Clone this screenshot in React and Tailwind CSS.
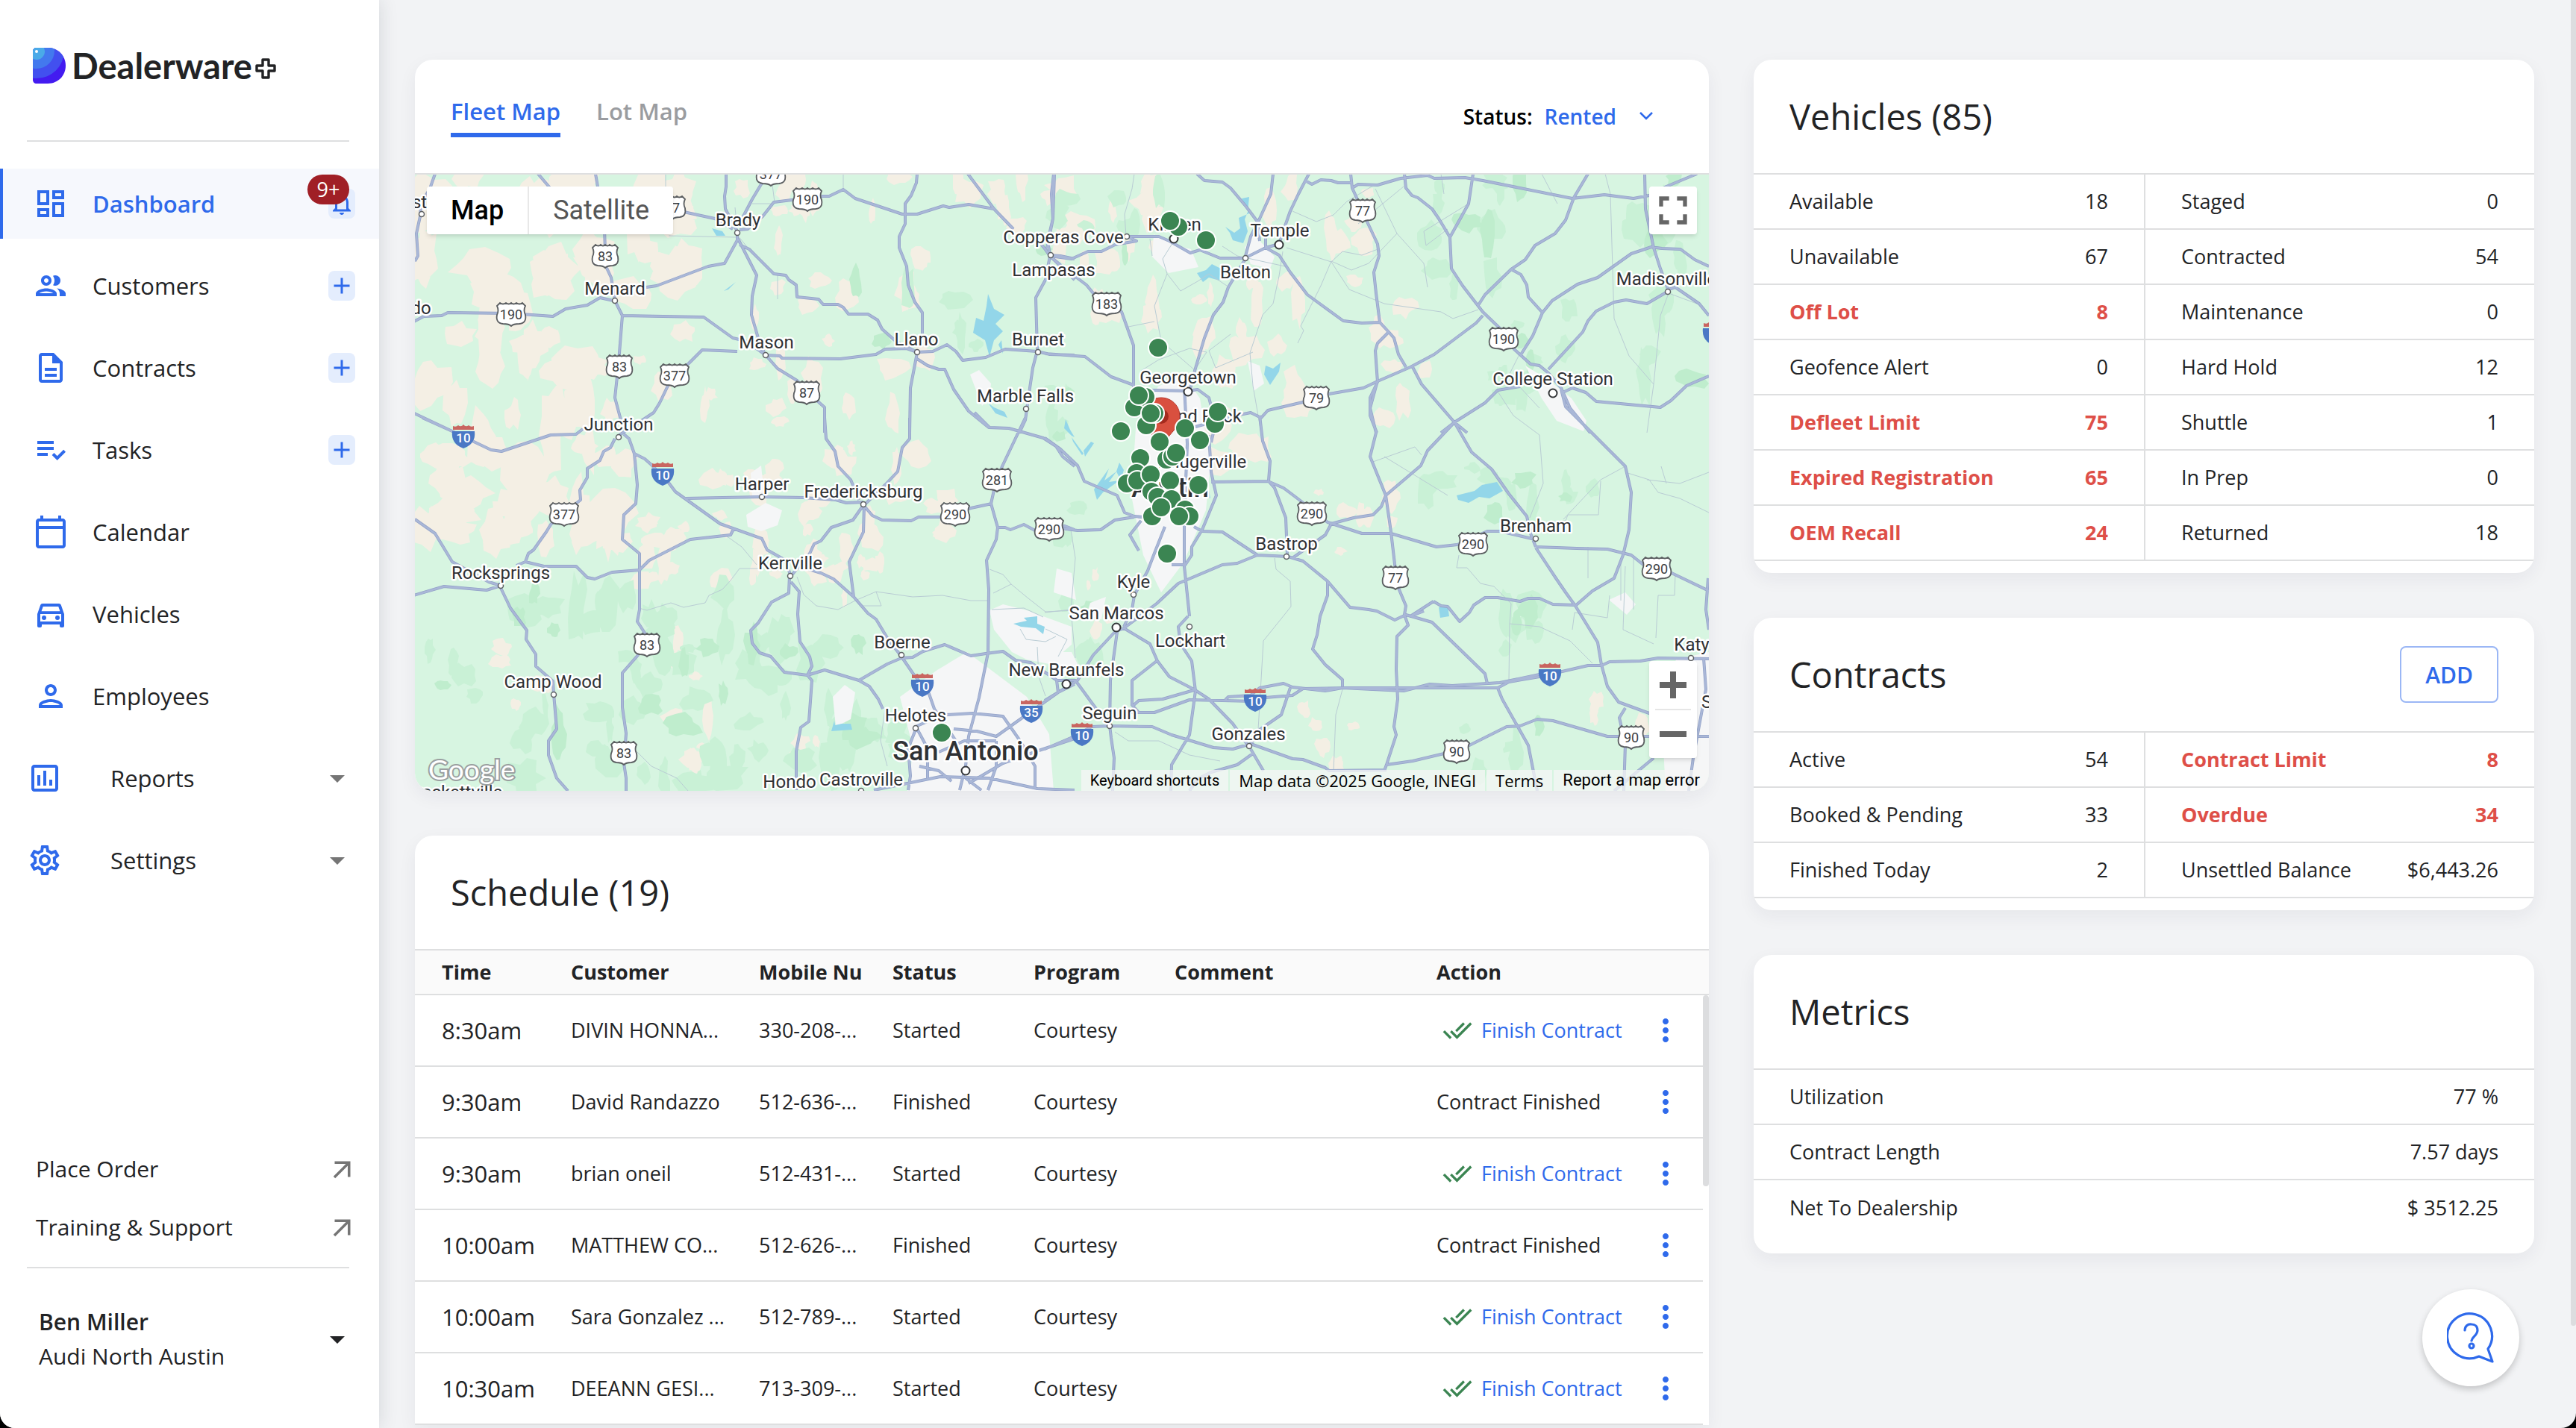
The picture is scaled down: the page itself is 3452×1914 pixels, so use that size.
import { useState } from 'react';
import {
  MdAdd,
  MdArrowDropDown,
  MdArrowOutward,
  MdDoneAll,
  MdFullscreen,
  MdMoreVert,
  MdNotificationsNone,
  MdOutlineAssessment,
  MdOutlineCalendarToday,
  MdOutlineDashboard,
  MdOutlineDescription,
  MdOutlineDirectionsCar,
  MdOutlineGroup,
  MdOutlinePerson,
  MdOutlineSettings,
  MdPlaylistAddCheck,
} from 'react-icons/md';

/* ── Data ───────────────────────────────────────────────────────── */
const NAV = [
  { label: 'Dashboard', Icon: MdOutlineDashboard, active: true, badge: '9+' },
  { label: 'Customers', Icon: MdOutlineGroup, add: true },
  { label: 'Contracts', Icon: MdOutlineDescription, add: true },
  { label: 'Tasks', Icon: MdPlaylistAddCheck, add: true },
  { label: 'Calendar', Icon: MdOutlineCalendarToday },
  { label: 'Vehicles', Icon: MdOutlineDirectionsCar },
  { label: 'Employees', Icon: MdOutlinePerson },
];

const NAV_GROUPS = [
  { label: 'Reports', Icon: MdOutlineAssessment },
  { label: 'Settings', Icon: MdOutlineSettings },
];

const VEHICLES = [
  [['Available', '18'], ['Staged', '0']],
  [['Unavailable', '67'], ['Contracted', '54']],
  [['Off Lot', '8', true], ['Maintenance', '0']],
  [['Geofence Alert', '0'], ['Hard Hold', '12']],
  [['Defleet Limit', '75', true], ['Shuttle', '1']],
  [['Expired Registration', '65', true], ['In Prep', '0']],
  [['OEM Recall', '24', true], ['Returned', '18']],
];

const CONTRACTS = [
  [['Active', '54'], ['Contract Limit', '8', true]],
  [['Booked & Pending', '33'], ['Overdue', '34', true]],
  [['Finished Today', '2'], ['Unsettled Balance', '$6,443.26']],
];

const METRICS = [
  ['Utilization', '77 %'],
  ['Contract Length', '7.57 days'],
  ['Net To Dealership', '$ 3512.25'],
];

const SCHEDULE = [
  { time: '8:30am', customer: 'DIVIN HONNA...', mobile: '330-208-...', status: 'Started' },
  { time: '9:30am', customer: 'David Randazzo', mobile: '512-636-...', status: 'Finished' },
  { time: '9:30am', customer: 'brian oneil', mobile: '512-431-...', status: 'Started' },
  { time: '10:00am', customer: 'MATTHEW CO...', mobile: '512-626-...', status: 'Finished' },
  { time: '10:00am', customer: 'Sara Gonzalez ...', mobile: '512-789-...', status: 'Started' },
  { time: '10:30am', customer: 'DEEANN GESI...', mobile: '713-309-...', status: 'Started' },
];

/* ── Map data: every tile keeps its own units ───────────────────── */
const TILES = {
  nw: { x: -16, y: -174, sx: 1.742, sy: 3 },
  ne: { x: 844, y: -174, sx: 1.704, sy: 3 },
  sw: { x: -16, y: 326, sx: 1.742, sy: 3 },
  se: { x: 844, y: 246, sx: 1.704, sy: 2.613 },
};

const ROADS = {
  nw: [
    '75,520 62,580 42,640 40,690 32,760 34,850 28,870',
    '20,1120 48,1092 90,1090 104,1077 250,1080 350,1092 380,1062 430,1047 460,1018 492,1028',
    '315,520 345,580', '450,520 454,570', '471,740 472,830 473,890 486,935 494,1030 512,1088 506,1240 500,1335 495,1420 508,1510',
    '512,1090 702,1095 770,1180 800,1190 845,1245',
    '568,975 592,970 712,890 750,878 780,785 780,760',
    '640,665 728,700 770,740', '755,520 755,570 750,610 752,660 780,750',
    '850,540 836,560 815,620 795,690 785,720', '785,745 805,742 840,690 865,632 908,625 980,610 995,608 1028,583 1055,618 1165,680 1200,682 1262,648 1275,653 1320,642 1380,660',
    '1318,520 1380,660 1425,740', '1490,800 1510,845',
    '1200,520 1198,555 1186,605 1173,640 1172,720 1158,772 1158,815 1175,890 1180,965 1195,1035 1212,1077 1212,1160',
    '1520,520 1518,700 1505,790 1510,845',
    '783,780 825,928 815,1010 814,1085 830,1180 845,1245',
    '785,805 808,822 865,922 893,928 900,945 918,967 920,1013 970,1023 980,1043 1015,1045 1028,1055 1040,1082 1085,1082 1108,1107 1118,1142 1150,1190 1200,1235',
    '780,1232 698,1227 668,1280 618,1370 600,1440 585,1480 560,1510 505,1570',
    '846,1247 880,1252 885,1260 1020,1262 1105,1245 1125,1223 1175,1222 1200,1235 1237,1233 1270,1207 1290,1232 1307,1270 1360,1256 1405,1224 1480,1232 1510,1245 1568,1247',
    '846,1247 875,1302 920,1350 968,1435 985,1458 985,1560',
    '1200,1240 1185,1380 1182,1560',
    '1200,1262 1225,1290 1250,1304 1265,1304 1285,1385 1320,1472 1368,1538 1415,1543 1495,1580',
    '1510,850 1500,945 1478,1018 1480,1230 1470,1300 1462,1400 1452,1510 1440,1555',
    '1510,845 1535,850 1568,862', '1510,850 1568,945', '20,1475 115,1555',
  ],
  ne: [
    '347,520 365,545 405,552 425,575 460,650 485,710 490,790',
    '522,520 516,600 490,700 470,770 458,850',
    '603,520 580,600 560,670 550,720 535,800 505,815 460,855 420,975 408,1035 385,1085 365,1180 342,1310 330,1395',
    '595,545 610,560 630,543 655,545 670,555 698,555', '698,520 702,575 712,615 735,705 760,800 763,850 752,915 757,1000 765,1115',
    '702,575 715,562 760,565 812,537 875,525 890,537 960,535 1000,547 1205,617 1278,603 1345,617 1380,605',
    '822,520 824,575 838,607 852,615 885,660 900,700 925,775 928,900 955,970 1000,1075 1045,1150 1072,1225 1110,1285 1130,1290 1150,1320 1180,1380 1200,1460 1245,1560',
    '978,520 968,640 925,775',
    '1240,520 1208,615 1190,705 1165,760 1120,808 1098,865 1065,902 1005,1005 990,1048',
    '1065,902 1088,925 1100,965 1105,1015 1137,1078',
    '1370,520 1372,660 1390,815 1405,900 1425,990', '1490,520 1420,570 1380,605',
    '1517,892 1485,865 1452,822 1410,820 1385,812 1340,840 1262,937 1217,962 1158,1028 1137,1078 1115,1170 1085,1250',
    '1425,990 1375,1040 1328,1027 1300,1035 1260,1070 1240,1110 1228,1155 1150,1305',
    '1425,985 1440,975 1495,1040 1517,1090',
    '188,772 260,772 285,790 332,837 355,825 400,857 458,858', '188,772 210,790 160,805 130,830 98,832 62,862 12,848 0,820',
    '20,520 15,600 18,700 5,820',
    '12,848 40,890 95,965 110,1000 175,1075 202,1210 202,1365',
    '505,775 505,815 535,845 560,915 600,1005 682,1110 725,1120 765,1115 785,1155 798,1180 808,1245 825,1297',
    '785,1155 760,1200 755,1230 760,1355 743,1420 743,1490 758,1560',
    '1000,1090 985,1120 890,1245 835,1297 760,1352 728,1380 650,1405 590,1437 510,1470 495,1500 470,1478 437,1492 345,1535',
    '840,1297 860,1365 935,1518 965,1560', '905,1560 935,1518 1005,1440 1035,1390 1085,1375',
    '0,1242 50,1247 92,1253 152,1335 202,1367 202,1385 248,1390 325,1392 350,1385 375,1420 390,1520 380,1600',
    '1180,1400 1205,1380 1235,1397 1260,1433 1405,1457 1430,1430 1465,1370 1517,1333',
  ],
  sw: [
    '45,0 115,55 165,95 205,130 230,135 345,70 405,65 420,45',
    '515,65 527,85 540,145 565,165 580,188 620,260 635,298 740,425 838,487 850,530 890,570 905,635',
    '540,145 547,270 543,345 515,390 513,490 553,545 553,770 547,820 570,880 548,955 512,1027 513,1165 520,1270 515,1390 520,1450 520,1500',
    '495,85 485,120 468,135 460,170 430,203 430,240 412,290 415,330 378,380 345,430 335,460 305,530 293,545 285,580',
    '28,408 75,465 115,580 200,660 228,675', '20,716 95,678 195,692 228,675',
    '265,595 285,580 330,598 405,598 430,642 448,647 487,622 553,612 575,573 670,490 765,470 772,448',
    '228,685 250,765 290,855 288,890 310,950 310,1000 350,1060 352,1110 358,1250 340,1300 340,1355 358,1450 385,1500',
    '660,323 838,318 935,320 1010,330 1035,342 1075,338',
    '985,0 987,85 1008,135 1015,195 1045,250 1065,330', '1182,0 1182,85 1165,120 1155,215 1125,270 1080,345',
    '1075,350 1095,393 1118,410 1187,415 1203,398 1255,400 1325,362 1375,345',
    '1075,350 1050,410 1000,440 975,495 960,507 950,545 905,635', '1077,350 1075,460 1042,580 1052,720',
    '930,600 975,625 1005,648 1052,720 1085,785 1105,810 1130,885 1163,960 1190,1025 1228,1110 1240,1170 1290,1300',
    '903,635 900,705 860,740 830,825 812,855 815,905 832,945 858,960 890,1022 945,1035 985,1015 1065,1055 1088,1080 1110,1130 1120,1170',
    '905,660 925,700 922,790 927,900 950,960 955,1000 945,1035 955,1055 948,1220 928,1245 918,1340 918,1498',
    '1065,1055 1130,990 1163,965 1190,962 1215,940 1265,912 1325,957 1360,947 1400,940 1430,975 1465,985 1530,1060',
    '1453,0 1398,195 1380,290 1373,345 1388,440 1385,490 1362,573 1367,690 1365,945 1345,1125 1320,1280 1313,1400',
    '1388,440 1405,442 1418,450 1450,430 1475,453 1545,435 1568,450',
    '1335,-20 1370,40 1415,43 1495,80 1525,115 1540,155 1568,195',
    '1270,1195 1330,1187 1400,1200 1440,1300 1475,1400 1475,1490', '1568,1070 1530,1105 1445,1205 1385,1280 1340,1260 1285,1250',
    '1400,1390 1490,1335 1568,1290', '1225,1220 1200,1240 1180,1330 1185,1440 1180,1498', '1100,1498 1255,1442 1370,1450 1480,1490 1568,1498',
    '1200,1250 1225,1330 1225,1450', '1313,1400 1300,1498', '1313,1450 1350,1498', '1385,1300 1385,1400 1365,1498',
    '1205,1400 1250,1420 1280,1460', '1320,1470 1400,1390', '1250,1345 1310,1300 1385,1300',
  ],
  se: [
    '935,225 975,330 1020,390 1060,475 1100,555 1110,615 1122,660',
    '935,225 875,325 858,375 778,482 768,520 750,548 705,560 655,580',
    '758,90 743,175 757,260 743,345 778,482 790,610 800,720 808,805 825,868 822,900 830,935 805,975 803,1090 806,1195 797,1290 803,1320 780,1425 775,1445',
    '380,435 510,430 545,455 572,487 610,530 645,575 725,613 790,615 895,660 943,653 1010,607 1040,605 1120,635',
    '490,200 497,290 515,360 512,430 525,455 550,560 553,690',
    '1180,110 1190,170 1325,380 1340,470 1335,600 1320,690 1300,770 1250,815 1212,868 1190,820 1168,770 1122,665',
    '1122,660 1215,667 1285,670 1340,690 1365,720 1432,752 1517,815', '1515,770 1510,880 1517,950',
    '1212,868 1262,995 1272,1075 1285,1150 1310,1205 1380,1245 1450,1275',
    '1212,865 1160,862 1130,842 1105,842 1085,852 1035,838 1005,840 980,865 970,890 948,922 920,870 905,868 887,852',
    '865,885 835,905 887,852',
    '340,590 360,605 405,608 485,690 555,695 590,712 645,780 697,873 740,880 758,885 800,917 825,900 885,925 1005,1105 1010,1140',
    '655,580 640,620 565,700', '485,690 440,718 405,725 305,790 255,860 180,945',
    '645,780 645,830 628,905 622,970 612,1020 640,1075 680,1125 680,1150',
    '375,270 380,400 392,480 360,600 335,660 335,690 318,730', '318,100 325,300 318,560 318,730 330,905', '275,590 248,690 235,745 205,830 200,880 180,940',
    '180,945 160,960 110,1040 75,1130 0,1200', '290,725 318,725', '220,570 195,620 215,675',
    '180,945 240,1000 258,1060 285,1115 340,1160 375,1195 430,1280 465,1360',
    '328,905 305,940 310,1000 335,1060 345,1165 330,1320 290,1425 288,1515',
    '165,960 150,1130 148,1285 152,1330 158,1400 155,1515', '255,1060 200,1130 200,1215 215,1240',
    '180,1240 250,1240 330,1197 480,1203 505,1190 565,1180 590,1158 690,1155 840,1155 1035,1155 1060,1135 1130,1115 1240,1077 1272,1077 1290,1063 1360,1060 1400,1050 1517,1052',
    '412,1197 420,1187 470,1180 490,1155 545,1140 565,1152 640,1165 680,1155 820,1165 880,1142 930,1148 1040,1137 1130,1108',
    '200,1220 215,1200 270,1195 340,1162',
    '148,1288 245,1290 290,1320 385,1365 430,1368 470,1350 565,1402 590,1405 640,1435 650,1445 780,1442',
    '780,1425 840,1412 940,1375 970,1355 1055,1290 1085,1287 1125,1265 1160,1270 1285,1325 1340,1325 1517,1325',
    '1035,1155 1045,1195 1105,1355 1125,1515', '1325,1225 1312,1260 1325,1350 1322,1515',
    '470,1370 500,1445', '475,1385 440,1425 380,1450 350,1475 330,1515', '0,1370 60,1330 108,1290 148,1288',
    '560,1155 540,1250 490,1300 468,1355', '0,280 35,320 75,375 90,430 165,480 182,540 205,555 240,560',
    '10,590 75,603 128,600 160,568 205,557', '1390,1400 1300,1515', '1505,1050 1510,1160 1480,1400 1470,1515',
    '30,1170 28,1130 70,1130 80,1150 145,1285',
  ],
};

const TRAILS = {
  nw: ['614,520 614,580', '860,540 868,632', '815,640 860,640', '775,655 780,750', '620,768 780,775', '780,765 805,815', '875,920 874,1022', '1028,520 1028,583'],
  ne: [
    '205,520 200,580 182,680 185,770', '543,830 535,930 522,1040 497,1085 468,1240 475,1370 495,1560', '552,815 655,872 680,830 725,845 765,820',
    '565,670 620,710 660,685 690,630 755,560', '755,580 805,760 865,880 875,975', '805,760 740,880 700,905 655,870', '820,570 715,720',
    '655,872 695,985 775,1040 905,1075 932,1100 990,1065', '295,790 270,860 280,920 250,1050 265,1190 345,1310', '280,920 310,990 350,950 375,920 415,970',
    '245,850 240,780', '405,810 440,850 548,890', '190,1135 250,1112', '655,870 630,970 585,1130 592,1150 577,1200', '1280,520 1292,600 1300,1100 1335,1250 1390,1365',
    '1425,1000 1405,1090 1390,1365 1375,1560', '1425,1000 1490,1040', '1135,520 1170,640', '968,640 865,750 870,808 920,740', '905,520 912,600', '1085,1240 1060,1330 1130,1460',
    '220,1310 260,1265 330,1220 370,1235 350,1290', '425,1165 375,1230 390,1300 475,1235',
  ],
  sw: [
    '755,475 790,520 825,590', '550,765 570,775 625,745 655,762 705,745 715,715 745,690 765,655 785,605 840,605', '920,640 935,710 965,755 1015,770 1055,735 1105,700 1190,720 1260,715 1325,735 1365,735',
    '1105,700 1117,757 1070,757', '1370,610 1400,630 1420,670 1460,725 1500,780 1568,775', '1375,770 1450,765 1495,800', '1440,850 1455,890 1500,900 1525,880', '1500,850 1550,890 1530,960',
    '545,1340 580,1400 640,1450 665,1500', '1480,920 1485,1040 1500,1120', '1125,1170 1115,1300 1130,1400', '1420,670 1378,705',
  ],
  se: [
    '1033,112 1070,200 1130,270 1138,440 1108,560', '1325,380 1270,425 1185,565', '1325,400 1380,425 1400,470 1450,490 1517,540', '1375,425 1450,440 1517,400',
    '525,700 528,740 560,780 563,870 500,990 492,1170 488,1300', '660,1450 665,1250 680,1160', '1110,610 1120,580 1190,570 1195,550 1265,548 1270,430',
    '940,735 965,735 995,790 1025,800 1065,860 1062,930 1130,940 1200,990 1250,1070', '1315,700 1315,850', '1290,830 1285,910 1210,890 1205,950', '1325,730 1320,950 1390,1000',
    '1345,700 1345,880', '1440,755 1438,830 1400,830 1395,980', '745,365 845,310 860,340', '775,345 920,480', '945,690 940,735', '0,890 60,880 70,1050', '60,600 70,700 60,880',
    '160,1310 190,1340 260,1340 330,1390 400,1410', '1240,660 1240,770', '1062,930 1060,1130', '1407,380 1420,440',
  ],
};

const LABELS = {
  nw: [
    [782, 705, 'Brady'], [495, 980, 'Menard'], [848, 1197, 'Mason'], [1199, 1185, 'Llano'],
    [1483, 1185, 'Burnet'], [504, 1527, 'Junction'], [1453, 1413, 'Marble Falls'], [38, 632, 'st'], [42, 1060, 'do'],
  ],
  ne: [
    [42, 775, 'Copperas Cove'], [296, 723, 'Killeen'], [536, 747, 'Temple'], [459, 915, 'Belton'], [20, 905, 'Lampasas'],
    [327, 1338, 'Georgetown'], [1160, 1343, 'College Station'], [1420, 942, 'Madisonville'],
  ],
  sw: [
    [838, 267, 'Harper'], [1075, 297, 'Fredericksburg'], [228, 624, 'Rocksprings'], [904, 584, 'Kerrville'], [1165, 903, 'Boerne'],
    [351, 1062, 'Camp Wood'], [1549, 1013, 'New Braunfels'], [1197, 1196, 'Helotes'], [903, 1465, 'Hondo'], [1070, 1455, 'Castroville'], [118, 1507, 'Brackettville'],
  ],
  se: [
    [340, 205, 'Round Rock'], [360, 362, 'Pflugerville'], [552, 651, 'Bastrop'], [1121, 588, 'Brenham'], [202, 783, 'Kyle'],
    [163, 893, 'San Marcos'], [332, 991, 'Lockhart'], [148, 1243, 'Seguin'], [466, 1317, 'Gonzales'], [1478, 1004, 'Katy'], [1512, 1205, 'S'],
  ],
};

const TOWNS = {
  nw: [[780, 755], [495, 1030], [847, 1247], [1200, 1235], [1482, 1235], [1455, 1464], [43, 681], [1512, 846]],
  ne: [[188, 772], [458, 858], [1423, 992]],
  sw: [[503, 78], [838, 318], [1075, 348], [228, 675], [904, 635], [1163, 954], [352, 1112], [1197, 1247], [1070, 1500]],
  se: [[552, 694], [1121, 632], [203, 828], [330, 940], [148, 1288], [467, 1360], [1475, 1050]],
};

const CITIES = {
  ne: [[295, 780], [535, 803], [327, 1394], [1160, 1400]],
  sw: [[1548, 1070], [1313, 1418]],
  se: [[163, 942]],
};

const SHIELDS = {
  nw: [[858, 520, '377'], [944, 620, '190'], [628, 655, '87'], [472, 848, '83'], [252, 1082, '190'], [505, 1292, '83'], [634, 1328, '377'], [942, 1397, '87']],
  ne: [[726, 665, '77'], [141, 1040, '183'], [1048, 1181, '190'], [620, 1418, '79']],
  sw: [[377, 386, '377'], [1386, 248, '281'], [1289, 386, '290'], [1509, 446, '290'], [569, 911, '83'], [515, 1346, '83']],
  se: [[610, 543, '290'], [978, 650, '290'], [1398, 737, '290'], [801, 768, '77'], [940, 1377, '90'], [1339, 1328, '90']],
};

const INTERSTATES = {
  sw: [[141, 76, '10'], [606, 225, '10'], [1212, 1073, '10'], [1467, 1178, '35']],
  se: [[480, 1196, '10'], [85, 1318, '10'], [1153, 1108, '10'], [1528, -86, '']],
};

const FLEET = {
  ne: [[305, 732], [287, 708], [368, 787], [259, 1218]],
  sw: [[1258, 1266]],
  se: [
    [205, 172], [230, 135], [215, 130], [231, 235], [250, 193], [242, 193], [174, 257], [320, 245], [388, 230], [395, 188],
    [354, 287], [278, 355], [292, 345], [262, 292], [300, 333], [218, 350], [210, 402], [188, 440], [212, 428], [242, 407], [286, 428],
    [351, 444], [244, 468], [258, 487], [290, 495], [321, 530], [331, 555], [307, 555], [245, 555], [265, 522], [279, 685],
  ],
};

// [x, y, width, height, count, min radius, max radius]
const SAND = [
  [0, 0, 400, 160, 26, 18, 42], [0, 120, 240, 220, 22, 16, 40], [230, 90, 460, 320, 34, 8, 24], [0, 340, 280, 140, 24, 16, 40],
  [0, 430, 230, 60, 9, 14, 30], [300, 390, 420, 150, 30, 8, 22], [430, 0, 360, 50, 12, 10, 24], [780, 0, 240, 150, 15, 10, 24],
  [860, 90, 220, 130, 8, 10, 22], [1040, 120, 150, 280, 22, 10, 26], [1140, 0, 170, 110, 8, 8, 20], [1240, 140, 120, 190, 8, 10, 20],
  [270, 460, 180, 110, 10, 8, 20], [450, 440, 130, 150, 9, 8, 18], [110, 570, 70, 180, 5, 8, 16], [345, 590, 50, 220, 9, 8, 18],
  [500, 750, 110, 70, 5, 6, 14], [1190, 410, 140, 120, 8, 6, 18], [900, 510, 90, 100, 4, 6, 12], [1160, 710, 100, 100, 6, 8, 16], [1540, 700, 110, 50, 4, 8, 14],
];

const FOREST = [
  [140, 560, 460, 260, 52, 10, 30], [0, 610, 90, 110, 4, 10, 20], [570, 710, 100, 70, 8, 12, 26], [840, 20, 180, 110, 7, 8, 20],
  [1350, 0, 180, 150, 10, 10, 28], [1440, 140, 110, 190, 10, 8, 22], [1630, 0, 100, 310, 12, 10, 28], [1340, 390, 300, 70, 10, 8, 22],
  [850, 270, 40, 240, 7, 8, 20], [1430, 570, 100, 80, 5, 10, 24], [1390, 720, 140, 80, 4, 8, 20], [570, 130, 230, 100, 5, 10, 22], [855, 570, 70, 110, 5, 10, 22],
];

const WATER = [
  '766,176 762,196 752,192 748,212 764,222 770,244 776,222 788,210 778,200 790,188 776,180 768,160',
  '1086,70 1098,78 1106,72 1104,58 1118,52 1112,40 1108,32 1118,30 1116,50 1112,60 1116,76 1110,92 1096,88 1092,78',
  '1048,132 1060,128 1068,120 1080,126 1078,142 1064,138 1056,144', '1140,256 1150,260 1160,252 1158,264 1146,282 1138,268',
  '1396,430 1420,424 1430,416 1450,412 1458,424 1440,434 1426,432 1412,440 1398,436', '1372,580 1384,578 1386,592 1374,594',
  '802,602 820,598 816,594 834,592 834,602 844,606 842,616 832,608 812,606', '560,718 563,738 572,736 584,736 586,744 558,746 562,732',
  '910,422 920,408 930,394 924,410 940,398 930,412 944,410 922,426 914,436', '872,328 878,342 884,352 880,350 870,340',
  '880,352 896,374 894,376 882,358', '896,370 906,358 910,360 898,378', '768,306 776,312 790,318 794,326 778,320', '1062,410 1066,434 1058,430',
  '398,72 412,76 416,82 404,82', '414,156 430,144 420,154', '944,386 950,396 946,410 940,398', '788,240 782,228 786,222',
];

const URBAN = [
  '650,700 700,664 740,640 780,670 820,700 850,750 856,826 660,826 668,770', '770,584 788,576 820,584 880,606 880,630 850,656 820,650 800,640 776,610',
  '990,80 1016,94 1040,100 1050,124 1010,132 988,110', '1112,98 1124,80 1152,110 1146,126 1120,120', '996,284 1030,268 1052,300 1066,390 1060,450 1030,520 1000,560 976,510 960,430 966,340',
  '1488,256 1520,276 1550,300 1570,330 1566,344 1530,330 1510,300', '444,456 470,440 492,450 486,470 464,478 446,472', '560,700 576,684 590,694 584,730 564,740',
  '860,528 880,534 886,570 856,560', '905,574 926,566 920,596 900,590', '1600,570 1622,560 1636,576 1624,590', '1690,650 1734,640 1734,826 1676,826 1670,710',
  '852,640 880,640 890,660 860,680', '744,268 756,262 772,280 770,300 760,310', '450,400 464,390 468,430 452,432', '1116,250 1132,256 1138,280 1124,290',
];

/* ── Map helpers ────────────────────────────────────────────────── */
function project(tile, x, y) {
  const t = TILES[tile];
  return [Math.round(t.x + x / t.sx), Math.round(t.y + y / t.sy)];
}

function toPath(tile, line) {
  return 'M' + line.split(' ').map((pair) => {
    const [x, y] = pair.split(',').map(Number);
    return project(tile, x, y).join(' ');
  }).join('L');
}

function collectPaths(layer) {
  return Object.entries(layer).flatMap(([tile, lines]) => lines.map((line) => toPath(tile, line))).join('');
}

function collectPoints(layer) {
  return Object.entries(layer).flatMap(([tile, points]) =>
    points.map(([x, y, text]) => {
      const [px, py] = project(tile, x, y);
      return { x: px, y: py, text };
    }),
  );
}

// seeded, so the ground cover is the same on every load
function groundCover(regions, seed) {
  let s = seed;
  const rand = () => {
    s = (s * 16807) % 2147483647;
    return s / 2147483647;
  };
  let d = '';
  regions.forEach(([x, y, w, h, count, min, max]) => {
    for (let i = 0; i < count; i++) {
      const cx = x + rand() * w;
      const cy = y + rand() * h;
      const r = min + rand() * (max - min);
      const squash = 0.5 + rand() * 0.8;
      for (let k = 0; k < 13; k++) {
        const a = (k / 13) * Math.PI * 2;
        const rr = r * (0.55 + rand() * 0.5);
        d += `${k ? 'L' : 'M'}${Math.round(cx + Math.cos(a) * rr * squash)} ${Math.round(cy + (Math.sin(a) * rr) / squash)}`;
      }
      d += 'Z';
    }
  });
  return d;
}

const ROAD_PATH = collectPaths(ROADS);
const TRAIL_PATH = collectPaths(TRAILS);
const SAND_PATH = groundCover(SAND, 4217);
const FOREST_PATH = groundCover(FOREST, 913);
const FOREST_DARK_PATH = groundCover(FOREST.map((r) => [r[0], r[1], r[2], r[3], Math.ceil(r[4] / 4), r[5], r[6] - 4]), 77);

function FleetMapDrawing() {
  return (
    <svg viewBox="0 0 1734 826" preserveAspectRatio="xMidYMid slice" className="block h-full w-full" role="img" aria-label="Fleet map">
      <rect width="1734" height="826" fill="#d7f5e1" />
      <path d={SAND_PATH} fill="#f4efe4" />
      <path d={FOREST_PATH} fill="#c9f1d6" />
      <path d={FOREST_DARK_PATH} fill="#bfedcd" />
      {URBAN.map((p) => <polygon key={p} points={p} fill="#f5f6f7" />)}
      {WATER.map((p) => <polygon key={p} points={p} fill="#93d6e9" />)}
      <path d={TRAIL_PATH} fill="none" stroke="#b9ccd4" strokeWidth="1" />
      <path d={ROAD_PATH} fill="none" stroke="#93a2c8" strokeWidth="4" strokeLinejoin="round" />
      <path d={ROAD_PATH} fill="none" stroke="#a9b7d7" strokeWidth="2.6" strokeLinejoin="round" />

      {collectPoints(TOWNS).map(({ x, y }) => (
        <circle key={`${x}-${y}`} cx={x} cy={y} r="3.5" fill="#fff" stroke="#5d6063" strokeWidth="1.5" />
      ))}
      {collectPoints(CITIES).map(({ x, y }) => (
        <circle key={`${x}-${y}`} cx={x} cy={y} r="5.5" fill="#fff" stroke="#333538" strokeWidth="2" />
      ))}

      <g fontFamily="Roboto, sans-serif" textAnchor="middle">
        {collectPoints(SHIELDS).map(({ x, y, text }) => (
          <g key={`${x}-${y}`} transform={`translate(${x} ${y})`}>
            <path
              d={text.length > 2
                ? 'M-15 -15 Q-11 -12 -7 -15 Q-3 -12 0 -15 Q3 -12 7 -15 Q11 -12 15 -15 L19 -11 Q16 -5 19 1 Q21 12 11 13 Q3 13 0 16 Q-3 13 -11 13 Q-21 12 -19 1 Q-16 -5 -19 -11Z'
                : 'M-13 -15 Q-9 -12 -6 -15 Q-3 -12 0 -15 Q3 -12 6 -15 Q9 -12 13 -15 L17 -11 Q14 -5 17 1 Q19 12 10 13 Q3 13 0 16 Q-3 13 -10 13 Q-19 12 -17 1 Q-14 -5 -17 -11Z'}
              fill="#fff" stroke="#5b5e61" strokeWidth="1.8"
            />
            <text y="7" fontSize="18" fill="#3c4043">{text}</text>
          </g>
        ))}
        {collectPoints(INTERSTATES).map(({ x, y, text }) => (
          <g key={`${x}-${y}`} transform={`translate(${x} ${y})`}>
            <path d="M-14 -9 L-14 -14 Q-10 -12 -7 -15 Q-3 -12 0 -16 Q3 -12 7 -15 Q10 -12 14 -14 L14 -9Z" fill="#c96560" />
            <path d="M-15 -7 L15 -7 Q17 10 0 16 Q-17 10 -15 -7Z" fill="#4a78c5" />
            <text y="8" fontSize="17" fontWeight="500" fill="#fff">{text}</text>
          </g>
        ))}
        <g fontSize="24" fill="#2f3134" stroke="#fff" strokeWidth="5" strokeLinejoin="round" style={{ paintOrder: 'stroke' }}>
          {collectPoints(LABELS).map(({ x, y, text }) => (
            <text key={text} x={x} y={y + 8}>{text}</text>
          ))}
          <text x="738" y="785" fontSize="36" fontWeight="500">San Antonio</text>
          <text x="1012" y="432" fontSize="36" fontWeight="500">Austin</text>
        </g>
      </g>

      {/* Dealership pin */}
      <path d="M1000 299c14 0 25 11 25 25 0 18-19 24-25 46-6-22-25-28-25-46 0-14 11-25 25-25z" fill="#d9503f" stroke="#b8362a" strokeWidth="1" />
      <circle cx="1000" cy="324" r="10" fill="#a52a1e" />

      {collectPoints(FLEET).map(({ x, y }) => (
        <circle key={`${x}-${y}`} cx={x} cy={y} r="13" fill="#3b8552" stroke="#fff" strokeWidth="2" />
      ))}
      <text x="18" y="811" fontFamily="Lato, sans-serif" fontSize="37" fill="#fff" stroke="#9a9fa0" strokeWidth="4" style={{ paintOrder: 'stroke' }}>Google</text>
    </svg>
  );
}

/* ── Shared pieces ──────────────────────────────────────────────── */
function Card({ children, className = '' }) {
  return (
    <section className={`overflow-hidden rounded-3xl bg-white shadow-[0_8px_24px_rgba(30,40,60,0.06)] ${className}`}>
      {children}
    </section>
  );
}

function CardTitle({ children, action }) {
  return (
    <header className="flex h-[154px] items-center justify-between border-b-2 border-[#dedfe0] px-12">
      <h2 className="text-[47px] leading-none">{children}</h2>
      {action}
    </header>
  );
}

function PairTable({ rows }) {
  return (
    <table className="mb-4 w-full table-fixed border-separate border-spacing-0 text-[27px]">
      <colgroup>
        <col className="w-[32%]" />
        <col className="w-[18%]" />
        <col className="w-[32%]" />
        <col className="w-[18%]" />
      </colgroup>
      <tbody>
        {rows.map(([left, right]) => (
          <tr key={left[0]}>
            <th scope="row" className={`h-[74px] border-b-2 border-[#dedfe0] pl-12 text-left whitespace-nowrap ${left[2] ? 'font-bold text-[#de4f48]' : 'font-normal'}`}>{left[0]}</th>
            <td className={`h-[74px] border-b-2 border-[#dedfe0] pr-12 text-right ${left[2] ? 'font-bold text-[#de4f48]' : ''}`}>{left[1]}</td>
            <th scope="row" className={`h-[74px] border-b-2 border-l-2 border-[#dedfe0] pl-12 text-left whitespace-nowrap ${right[2] ? 'font-bold text-[#de4f48]' : 'font-normal'}`}>{right[0]}</th>
            <td className={`h-[74px] border-b-2 border-[#dedfe0] pr-12 text-right ${right[2] ? 'font-bold text-[#de4f48]' : ''}`}>{right[1]}</td>
          </tr>
        ))}
      </tbody>
    </table>
  );
}

/* ── Sidebar ────────────────────────────────────────────────────── */
function Logo() {
  return (
    <a href="#home" className="flex h-12 items-center gap-2">
      <svg viewBox="0 0 44 48" className="h-12 w-11" aria-hidden="true">
        <defs>
          <clipPath id="mark"><path d="M5 0h15c14 0 24 11 24 24S34 48 20 48H5c-3 0-5-2-5-5V5c0-3 2-5 5-5z" /></clipPath>
        </defs>
        <g clipPath="url(#mark)">
          <rect width="44" height="48" fill="#431bf0" />
          <circle cx="5" cy="4" r="37" fill="#4250ef" />
          <circle cx="5" cy="4" r="24" fill="#4379ee" />
          <circle cx="5" cy="5" r="11" fill="#4aaae8" />
          <circle cx="5" cy="5" r="2" fill="#fff" />
        </g>
      </svg>
      <span className="flex items-center">
        <span className="font-[Lato] text-[47px] leading-none font-bold">Dealerware</span>
        <svg viewBox="0 0 28 28" className="mt-2 ml-1 size-7" fill="none" stroke="currentColor" strokeWidth="3.4" strokeLinejoin="round" aria-hidden="true">
          <path d="M10 2h8v8h8v7h-8v9h-8v-9H2v-7h8z" />
        </svg>
      </span>
    </a>
  );
}

function Sidebar() {
  return (
    <aside className="relative z-10 flex w-[508px] shrink-0 flex-col bg-white shadow-[0_0_24px_rgba(30,40,60,0.14)]">
      <div className="mr-10 ml-9 h-[190px] border-b-2 border-[#dedfe0] px-2 pt-16"><Logo /></div>

      <nav className="mt-9 flex flex-col gap-4 text-[31px]">
        {NAV.map(({ label, Icon, active, badge, add }) => (
          <div
            key={label}
            className={`relative flex h-[94px] items-center justify-between border-l-4 pr-8 pl-10 ${active ? 'border-[#2f6aeb] bg-[#f6f8fd] font-semibold text-[#2f6aeb]' : 'border-transparent'}`}
          >
            <a href={`#${label.toLowerCase()}`} className="flex items-center gap-8">
              <Icon className="size-12 text-[#2f6aeb]" />
              {label}
            </a>
            {badge && (
              <button aria-label="Notifications" className="grid h-10 w-9 place-items-center rounded-lg bg-[#e4edfd]">
                <MdNotificationsNone className="size-9" />
                <span className="absolute top-2 right-10 grid h-10 w-14 place-items-center rounded-full bg-[#a01f26] text-[27px] font-normal text-white">{badge}</span>
              </button>
            )}
            {add && (
              <button aria-label={`Add to ${label}`} className="grid h-10 w-9 place-items-center rounded-lg bg-[#e4edfd] text-[#2f6aeb]">
                <MdAdd className="size-9" />
              </button>
            )}
          </div>
        ))}
        {NAV_GROUPS.map(({ label, Icon }) => (
          <button key={label} className="flex h-[94px] items-center pr-8 pl-9 text-left">
            <Icon className="size-12 text-[#2f6aeb]" />
            <span className="flex-1 pl-16">{label}</span>
            <MdArrowDropDown className="size-12 text-[#757575]" />
          </button>
        ))}
      </nav>

      <div className="mr-10 ml-9 mt-auto flex flex-col gap-9 border-b-2 border-[#dedfe0] pb-8 pl-3 text-[30px] leading-[42px]">
        <a href="#order" className="flex items-center justify-between">Place Order <MdArrowOutward className="-mr-3 size-[42px] text-[#757575]" /></a>
        <a href="#support" className="flex items-center justify-between">Training &amp; Support <MdArrowOutward className="-mr-3 size-[42px] text-[#757575]" /></a>
      </div>

      <button className="flex h-[214px] items-center justify-between pr-8 pb-6 pl-[52px] text-left text-[30px] leading-[46px]">
        <span>
          <span className="block font-semibold">Ben Miller</span>
          <span className="block">Audi North Austin</span>
        </span>
        <MdArrowDropDown className="size-12" />
      </button>
    </aside>
  );
}

/* ── Map card ───────────────────────────────────────────────────── */
function FleetMapCard() {
  const [tab, setTab] = useState('Fleet Map');
  return (
    <Card>
      <header className="flex h-[154px] items-center justify-between border-b-2 border-[#dedfe0] pr-16 pl-12">
        <div className="flex gap-12 text-[31px] leading-[42px] font-semibold">
          {['Fleet Map', 'Lot Map'].map((name) => (
            <button
              key={name}
              onClick={() => setTab(name)}
              className={`border-b-[6px] pb-2 ${tab === name ? 'border-[#2f6aeb] text-[#2f6aeb]' : 'border-transparent text-[#9a9ca0]'}`}
            >
              {name}
            </button>
          ))}
        </div>
        <div className="flex items-center gap-4 text-[28px] font-semibold">
          <label htmlFor="status" className="text-black">Status:</label>
          <span className="relative">
            <select id="status" defaultValue="Rented" className="field-sizing-content appearance-none bg-transparent pr-15 text-[#2f6aeb]">
              <option>Rented</option>
              <option>Available</option>
            </select>
            <svg viewBox="0 0 24 24" className="pointer-events-none absolute top-2 right-2 size-6" fill="none" stroke="#2f6aeb" strokeWidth="2.5" aria-hidden="true">
              <path d="M4 8l8 8 8-8" />
            </svg>
          </span>
        </div>
      </header>

      <div className="relative h-[826px] font-[Roboto]">
        <FleetMapDrawing />
        <div className="absolute top-4 left-4 flex h-16 divide-x-2 divide-[#e8e8e8] rounded bg-white text-4xl shadow-md">
          <button className="px-8 font-medium text-black">Map</button>
          <button className="px-8 text-[#565656]">Satellite</button>
        </div>
        <button aria-label="Toggle fullscreen" className="absolute top-4 right-4 grid size-16 place-items-center rounded bg-white text-[#666] shadow-md">
          <MdFullscreen className="size-16" />
        </button>
        <div className="absolute right-4 bottom-11 flex w-16 flex-col items-center rounded bg-white text-[#666] shadow-md">
          <button aria-label="Zoom in" className="grid size-16 place-items-center">
            <svg viewBox="0 0 36 36" className="size-9" aria-hidden="true"><path d="M14 0h8v14h14v8H22v14h-8V22H0v-8h14z" fill="currentColor" /></svg>
          </button>
          <div className="h-0.5 w-12 bg-[#e6e6e6]" />
          <button aria-label="Zoom out" className="grid size-16 place-items-center">
            <svg viewBox="0 0 36 36" className="size-9" aria-hidden="true"><path d="M0 14h36v8H0z" fill="currentColor" /></svg>
          </button>
        </div>
        <div className="absolute right-0 bottom-0 flex gap-0.5 text-[20px] leading-7 text-black">
          <button className="bg-[#f5f5f5]/75 px-3">Keyboard shortcuts</button>
          <span className="bg-[#f5f5f5]/75 px-3 font-['Open_Sans'] text-[22px]">Map data ©2025 Google, INEGI</span>
          <a href="#terms" className="bg-[#f5f5f5]/75 px-3 font-['Open_Sans'] text-[22px]">Terms</a>
          <a href="#report" className="bg-[#f5f5f5]/75 px-3 text-[22px]">Report a map error</a>
        </div>
      </div>
    </Card>
  );
}

/* ── Schedule ───────────────────────────────────────────────────── */
function ScheduleCard() {
  return (
    <Card className="rounded-b-none">
      <CardTitle>Schedule (19)</CardTitle>
      <div className="relative">
        <table className="w-full table-fixed border-separate border-spacing-0 text-left text-[27px] whitespace-nowrap">
          <colgroup>
            <col className="w-[209px]" />
            <col className="w-[252px]" />
            <col className="w-[179px]" />
            <col className="w-[189px]" />
            <col className="w-[189px]" />
            <col />
            <col className="w-[283px]" />
            <col className="w-[82px]" />
          </colgroup>
          <thead className="bg-[#fafafa]">
            <tr>
              {['Time', 'Customer', 'Mobile Nu', 'Status', 'Program', 'Comment', 'Action', ''].map((name) => (
                <th key={name} scope="col" className="h-[60px] border-b-2 border-[#dedfe0] font-bold first:pl-9">{name}</th>
              ))}
            </tr>
          </thead>
          <tbody>
            {SCHEDULE.map((row) => (
              <tr key={row.customer}>
                <td className="h-24 border-b-2 border-[#dedfe0] pl-9 text-[31px]">{row.time}</td>
                <td className="h-24 border-b-2 border-[#dedfe0]">{row.customer}</td>
                <td className="h-24 border-b-2 border-[#dedfe0]">{row.mobile}</td>
                <td className="h-24 border-b-2 border-[#dedfe0]">{row.status}</td>
                <td className="h-24 border-b-2 border-[#dedfe0]">Courtesy</td>
                <td className="h-24 border-b-2 border-[#dedfe0]" />
                <td className="h-24 border-b-2 border-[#dedfe0]">
                  {row.status === 'Started' ? (
                    <button className="flex items-center gap-3 pl-2 text-[#2f6aeb]">
                      <MdDoneAll className="size-10 text-[#3b8552]" />
                      Finish Contract
                    </button>
                  ) : 'Contract Finished'}
                </td>
                <td className="h-24 border-b-2 border-[#dedfe0]">
                  <button aria-label={`More actions for ${row.customer}`} className="block text-[#2f6aeb]">
                    <MdMoreVert className="size-12" />
                  </button>
                </td>
              </tr>
            ))}
          </tbody>
        </table>
        <div className="absolute top-[60px] right-0 bottom-0 w-2 bg-white">
          <div className="h-64 rounded-full bg-[#dcdddf]" />
        </div>
      </div>
    </Card>
  );
}

/* ── Page ───────────────────────────────────────────────────────── */
export default function App() {
  return (
    <div className="h-screen bg-black">
      <div className="relative flex h-full overflow-hidden rounded-b-[20px] bg-[#f2f3f5] font-['Open_Sans',sans-serif] text-[#222325]">
        <Sidebar />

        <main className="grid flex-1 grid-cols-[minmax(0,1fr)_1046px] items-start gap-[60px] overflow-hidden pt-20 pr-14 pl-12">
          <div className="flex flex-col gap-[60px]">
            <FleetMapCard />
            <ScheduleCard />
          </div>

          <div className="flex flex-col gap-[60px]">
            <Card>
              <CardTitle>Vehicles (85)</CardTitle>
              <PairTable rows={VEHICLES} />
            </Card>
            <Card>
              <CardTitle action={<button className="h-[76px] rounded-lg border-2 border-[#9bb7f5] px-8 text-[30px] font-semibold text-[#2f6aeb]">ADD</button>}>
                Contracts
              </CardTitle>
              <PairTable rows={CONTRACTS} />
            </Card>
            <Card>
              <CardTitle>Metrics</CardTitle>
              <table className="mb-6 w-full border-separate border-spacing-0 text-[27px]">
                <tbody>
                  {METRICS.map(([label, value]) => (
                    <tr key={label} className="group">
                      <th scope="row" className="h-[74px] border-b-2 border-[#dedfe0] pl-12 text-left font-normal group-last:border-b-0">{label}</th>
                      <td className="h-[74px] border-b-2 border-[#dedfe0] pr-12 text-right group-last:border-b-0">{value}</td>
                    </tr>
                  ))}
                </tbody>
              </table>
            </Card>
          </div>
        </main>

        {/* Page scroll thumb */}
        <div className="absolute top-0 right-0 h-[1777px] w-[7px] rounded-b-full bg-[#dcdddf]" />

        <button aria-label="Help" className="absolute right-[76px] bottom-14 grid size-[130px] place-items-center rounded-full bg-white shadow-[0_4px_10px_rgba(0,0,0,0.2)]">
          <svg viewBox="0 0 64 70" className="h-[70px] w-16" fill="none" stroke="#2f6aeb" strokeWidth="3.2" strokeLinecap="round" strokeLinejoin="round" aria-hidden="true">
            <path d="M55 50l6 17-18-7a30 30 0 1 1 12-10z" />
            <path d="M24 25c0-5 4-9 9-8 5 0 8 3 8 8 0 7-7 8-8 14" />
            <circle cx="33" cy="46" r="3" />
          </svg>
        </button>
      </div>
    </div>
  );
}
